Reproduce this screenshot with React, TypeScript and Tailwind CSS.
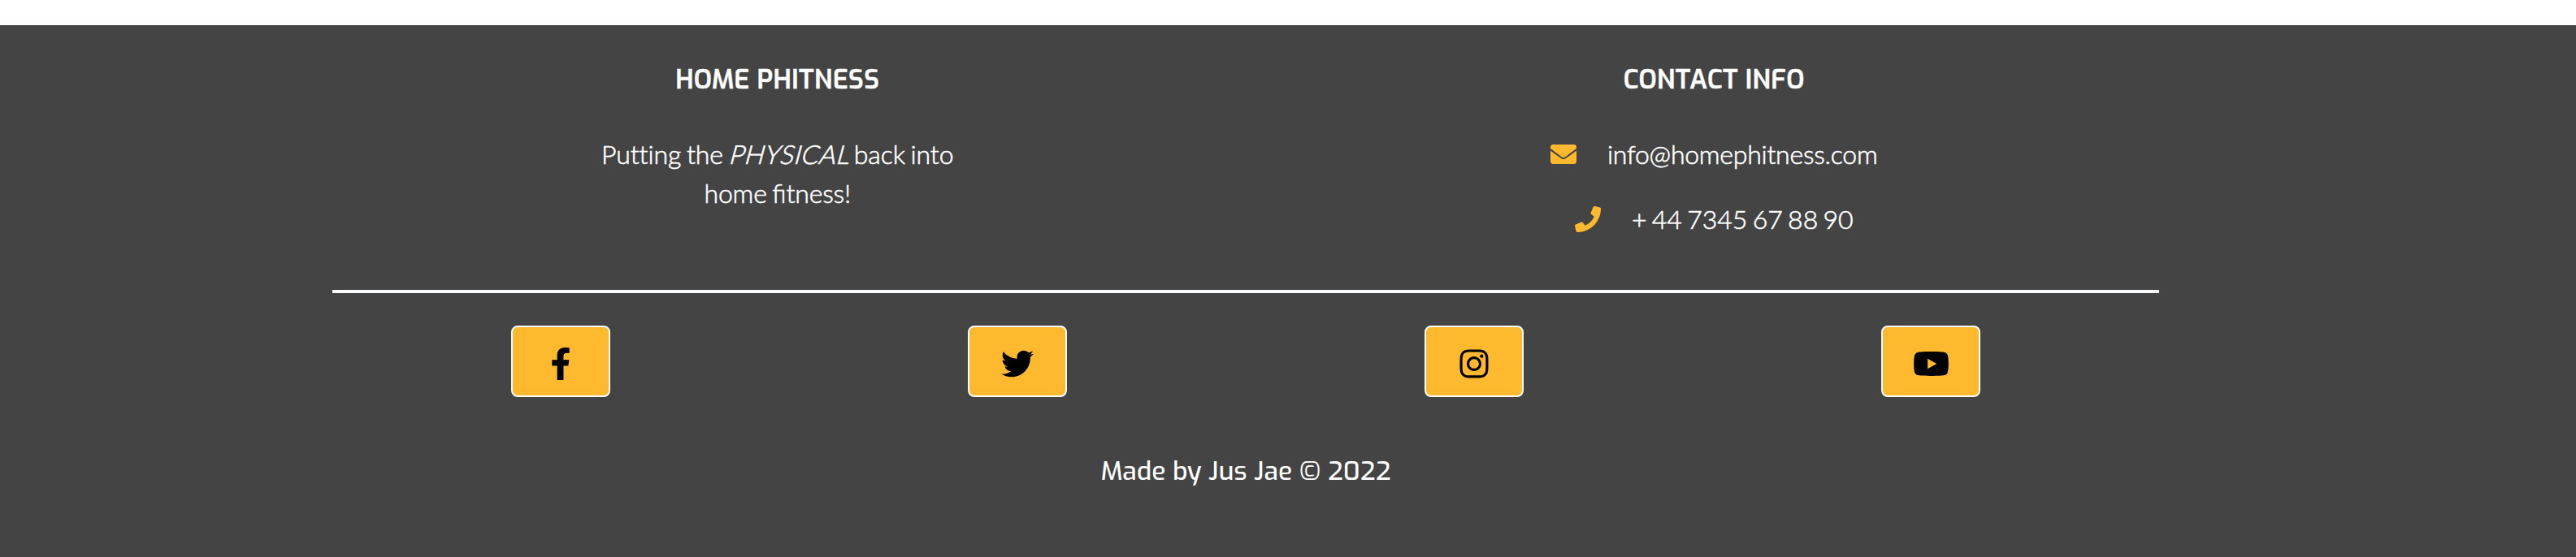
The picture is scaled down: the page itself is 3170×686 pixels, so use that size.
import { FaFacebookF, FaTwitter, FaInstagram, FaYoutube, FaEnvelope, FaPhone } from "react-icons/fa";

const socials = [
  { name: "Facebook", Icon: FaFacebookF, size: "h-10 w-10" },
  { name: "Twitter", Icon: FaTwitter, size: "h-10 w-10" },
  { name: "Instagram", Icon: FaInstagram, size: "h-10 w-10" },
  { name: "YouTube", Icon: FaYoutube, size: "h-10 w-[45px]" },
];

export default function App() {
  return (
    <div className="h-[686px] w-[3170px] bg-white pt-[31px] font-['Lato',sans-serif]">
      <footer className="h-[655px] bg-[#444444] pl-[409px] text-[32px] leading-[48px] text-white">
        <div className="w-[2248px]">
          <div className="flex h-[330px] border-b-4 border-[#fafcfd] pt-[43px] text-center">
            <section className="w-[1096px]">
              <h2 className="font-['Exo',sans-serif] font-semibold tracking-[0.4px] [-webkit-text-stroke:0.4px_white]">HOME PHITNESS</h2>
              <p className="mt-[44px] font-light [-webkit-text-stroke:0.6px_white] [word-spacing:-1.8px]">
                <span className="tracking-[-0.1px]">Putting the </span>
                <em className="-ml-px inline-block origin-[0_36px] skew-x-[-15deg] tracking-[0.35px] not-italic">PHYSICAL</em>
                <span className="tracking-[-0.1px]"> back into</span>
                <br />
                <span className="tracking-[-0.2px]">home </span>fi<span className="tracking-[-0.2px]">tness!</span>
              </p>
            </section>
            <section className="ml-[57px] w-[1096px]">
              <h2 className="font-['Exo',sans-serif] font-semibold tracking-[0.4px] [-webkit-text-stroke:0.4px_white]">CONTACT INFO</h2>
              <p className="mt-[44px] flex items-center justify-center font-light tracking-[-0.25px]">
                <FaEnvelope className="mr-[38px] text-[#ffb92e]" />
                <span className="[-webkit-text-stroke:0.6px_white]">info@homephitness.com</span>
              </p>
              <p className="mt-[32px] flex items-center justify-center font-light">
                <FaPhone className="mr-[38px] text-[#ffb92e]" />
                <span className="[-webkit-text-stroke:0.6px_white] [word-spacing:-2.4px]">+ 44 7345 67 88 90</span>
              </p>
            </section>
          </div>
          <div className="grid grid-cols-4 justify-items-center pt-[40px]">
            {socials.map(({ name, Icon, size }) => (
              <a
                key={name}
                aria-label={name}
                className="flex h-[88px] w-[122px] items-center justify-center rounded-lg border-2 border-[#fafcfd] bg-[#ffb92e] pt-[6px] text-black"
              >
                <Icon className={size} />
              </a>
            ))}
          </div>
          <p className="mt-[67px] text-center font-['Exo',sans-serif] font-medium">Made by Jus Jae © 2022</p>
        </div>
      </footer>
    </div>
  );
}
